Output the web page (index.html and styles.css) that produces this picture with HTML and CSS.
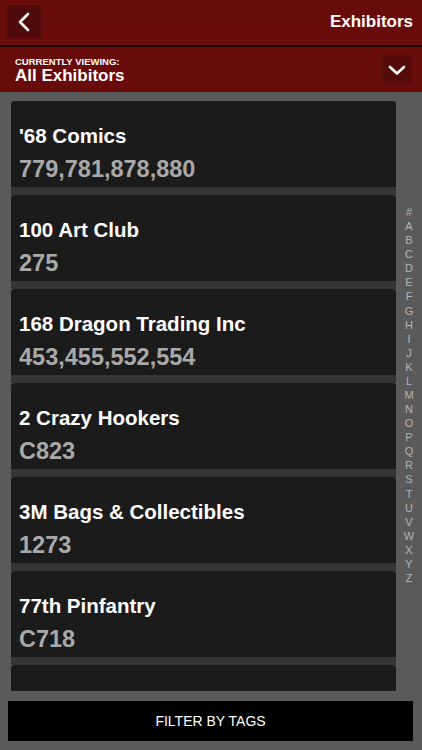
FILE: index.html
```html
<html lang="en">

<head>
    <meta charset="UTF-8">
    <meta name="viewport" content="width=device-width, initial-scale=1.0">
    <title>Exhibitors</title>
    <link rel="stylesheet" href="styles.css">
</head>

<body>
    <div class="app">
        <div class="topbar">
            <button class="back-btn">
                <svg width="14" height="20" viewBox="0 0 14 20"><path d="M11 2 L3 10 L11 18" fill="none" stroke="#fff" stroke-width="2.6" stroke-linecap="round" stroke-linejoin="round"/></svg>
            </button>
            <div class="title">Exhibitors</div>
        </div>

        <div class="viewing">
            <div class="viewing-text">
                <div class="viewing-label">CURRENTLY VIEWING:</div>
                <div class="viewing-value">All Exhibitors</div>
            </div>
            <button class="drop-btn">
                <svg width="18" height="12" viewBox="0 0 18 12"><path d="M2 3 L9 9.5 L16 3" fill="none" stroke="#fff" stroke-width="2.6" stroke-linecap="round" stroke-linejoin="round"/></svg>
            </button>
        </div>

        <div class="list-area">
            <div class="cards">
                <div class="card">
                    <div class="card-name">'68 Comics</div>
                    <div class="card-booth">779,781,878,880</div>
                </div>
                <div class="card">
                    <div class="card-name">100 Art Club</div>
                    <div class="card-booth">275</div>
                </div>
                <div class="card">
                    <div class="card-name">168 Dragon Trading Inc</div>
                    <div class="card-booth">453,455,552,554</div>
                </div>
                <div class="card">
                    <div class="card-name">2 Crazy Hookers</div>
                    <div class="card-booth">C823</div>
                </div>
                <div class="card">
                    <div class="card-name">3M Bags &amp; Collectibles</div>
                    <div class="card-booth">1273</div>
                </div>
                <div class="card">
                    <div class="card-name">77th Pinfantry</div>
                    <div class="card-booth">C718</div>
                </div>
                <div class="card">
                    <div class="card-name">A.B's Candy Lounge</div>
                    <div class="card-booth">1111</div>
                </div>
            </div>

            <div class="index">
                <span>#</span><span>A</span><span>B</span><span>C</span><span>D</span><span>E</span><span>F</span>
                <span>G</span><span>H</span><span>I</span><span>J</span><span>K</span><span>L</span><span>M</span>
                <span>N</span><span>O</span><span>P</span><span>Q</span><span>R</span><span>S</span><span>T</span>
                <span>U</span><span>V</span><span>W</span><span>X</span><span>Y</span><span>Z</span>
            </div>
        </div>

        <div class="footer">
            <button class="filter-btn">FILTER BY TAGS</button>
        </div>
    </div>
</body>

</html>
```

FILE: styles.css
```css
* {
    box-sizing: border-box;
}

body {
    margin: 0;
    padding: 0;
    background-color: #5a5a5a;
    font-family: "Liberation Sans", Arial, sans-serif;
    color: #fff;
}

.app {
    width: 422px;
    height: 750px;
    display: flex;
    flex-direction: column;
    overflow: hidden;
}

button {
    border: none;
    padding: 0;
    cursor: pointer;
    font-family: inherit;
}

.topbar {
    height: 47px;
    display: flex;
    align-items: center;
    justify-content: space-between;
    padding: 0 9px 2px 7px;
    background-color: #680b0b;
    border-bottom: 2px solid #1e0505;
}

.back-btn {
    width: 34px;
    height: 33px;
    display: flex;
    align-items: center;
    justify-content: center;
    background-color: #4f0b0b;
}

.title {
    font-size: 17px;
    font-weight: bold;
}

.viewing {
    height: 45px;
    display: flex;
    align-items: center;
    justify-content: space-between;
    padding: 0 10px 0 15px;
    background-color: #680b0b;
}

.viewing-text {
    padding-top: 2px;
}

.viewing-label {
    font-size: 9.5px;
    font-weight: bold;
    line-height: 11px;
}

.viewing-value {
    font-size: 17px;
    font-weight: bold;
    line-height: 18px;
}

.drop-btn {
    width: 30px;
    height: 29px;
    display: flex;
    align-items: center;
    justify-content: center;
    background-color: #560b0b;
    border-radius: 2px;
}

.list-area {
    height: 599px;
    display: flex;
    padding: 9px 0 0 11px;
    overflow: hidden;
}

.cards {
    width: 385px;
    flex-shrink: 0;
}

.card {
    height: 94px;
    padding: 23px 8px 0 8px;
    background-color: #1b1b1b;
    border-bottom: 8px solid #353535;
    border-radius: 3px 3px 0 0;
}

.card-name {
    font-size: 20.5px;
    font-weight: bold;
    line-height: 23px;
    white-space: nowrap;
}

.card-booth {
    margin-top: 9px;
    font-size: 23.5px;
    font-weight: bold;
    line-height: 27px;
    color: #a9a9a9;
}

.index {
    flex: 1;
    display: flex;
    flex-direction: column;
    align-items: center;
    padding-top: 104px;
}

.index span {
    font-size: 11px;
    line-height: 14.08px;
    color: #b4b4b4;
}

.footer {
    flex: 1;
    padding: 10px 9px 9px 8px;
}

.filter-btn {
    width: 100%;
    height: 40px;
    background-color: #000;
    color: #fff;
    font-size: 14px;
}
```
